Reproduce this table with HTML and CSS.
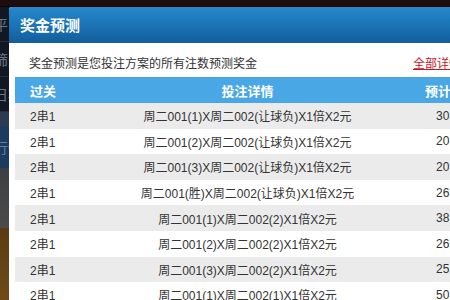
FILE: index.html
```html
<!DOCTYPE html>
<html lang="zh-CN">
<head>
<meta charset="utf-8">
<title>奖金预测</title>
<link rel="stylesheet" href="styles.css">
</head>
<body>
<div class="page">
  <div class="topbar"></div>
  <div class="side">
    <div class="side-item dark">平台</div>
    <div class="side-item dark">筛选</div>
    <div class="side-item dark">日期</div>
    <div class="side-item steel"></div>
    <div class="side-item blue">行情</div>
    <div class="side-item gray"></div>
    <div class="side-item brown"></div>
  </div>
</div>

<div class="modal">
  <div class="modal-title">奖金预测</div>
  <div class="modal-desc">
    <span>奖金预测是您投注方案的所有注数预测奖金</span>
    <a class="all-link" href="#">全部详情</a>
  </div>
  <table class="grid">
    <thead>
      <tr><th class="c1">过关</th><th class="c2">投注详情</th><th class="c3">预计奖金</th></tr>
    </thead>
    <tbody>
      <tr><td class="c1">2串1</td><td class="c2">周二001(1)X周二002(让球负)X1倍X2元</td><td class="c3">30.24</td></tr>
      <tr><td class="c1">2串1</td><td class="c2">周二001(2)X周二002(让球负)X1倍X2元</td><td class="c3">20.16</td></tr>
      <tr><td class="c1">2串1</td><td class="c2">周二001(3)X周二002(让球负)X1倍X2元</td><td class="c3">20.16</td></tr>
      <tr><td class="c1">2串1</td><td class="c2">周二001(胜)X周二002(让球负)X1倍X2元</td><td class="c3">26.88</td></tr>
      <tr><td class="c1">2串1</td><td class="c2">周二001(1)X周二002(2)X1倍X2元</td><td class="c3">38.40</td></tr>
      <tr><td class="c1">2串1</td><td class="c2">周二001(2)X周二002(2)X1倍X2元</td><td class="c3">26.40</td></tr>
      <tr><td class="c1">2串1</td><td class="c2">周二001(3)X周二002(2)X1倍X2元</td><td class="c3">25.60</td></tr>
      <tr><td class="c1">2串1</td><td class="c2">周二001(1)X周二002(1)X1倍X2元</td><td class="c3">50.40</td></tr>
    </tbody>
  </table>
</div>
</body>
</html>
```

FILE: styles.css
```css
html, body {
  margin: 0;
  padding: 0;
  width: 450px;
  height: 300px;
  overflow: hidden;
  background: #141720;
  font-family: "Liberation Sans", "Noto Sans CJK SC", sans-serif;
}

.page {
  display: flex;
  flex-direction: column;
  height: 300px;
}

.topbar {
  height: 6px;
  background: #1e0d0e;
  border-bottom: 1px solid #0a0506;
}

.side {
  display: flex;
  flex-direction: column;
  flex: 1;
  width: 60px;
}

.side-item {
  display: flex;
  align-items: center;
  font-size: 14px;
  color: #6f7582;
  overflow: hidden;
  white-space: nowrap;
}

.side-item.dark {
  height: 34px;
  background: #121823;
  border-bottom: 1px solid #262c38;
  text-indent: -6px;
}

.side-item.steel {
  height: 14px;
  background: #2b3b52;
}

.side-item.blue {
  height: 42px;
  background: #1d3b60;
  color: #5f7fa3;
  text-indent: -6px;
}

.side-item.gray {
  height: 60px;
  background: linear-gradient(#3d3f43, #4b4b4b);
}

.side-item.brown {
  flex: 1;
  background: linear-gradient(#5b3c12, #6e4a17);
}

.modal {
  position: absolute;
  left: 9px;
  top: 7px;
  width: 490px;
  height: 310px;
  background: #fff;
  border-radius: 3px 3px 0 0;
  overflow: hidden;
}

.modal-title {
  height: 36px;
  line-height: 37px;
  padding-left: 11px;
  background: linear-gradient(#2688cc, #1a72b4 55%, #135d9a);
  color: #fff;
  font-size: 15px;
  font-weight: bold;
}

.modal-desc {
  display: flex;
  justify-content: space-between;
  align-items: center;
  height: 34px;
  padding: 4px 0 0 20px;
  box-sizing: border-box;
  font-size: 12px;
  color: #333;
}

.all-link {
  color: #c8161d;
  text-decoration: underline;
  margin-right: -6px;
  width: 92px;
}

.grid {
  margin-left: 6px;
  border-collapse: collapse;
  table-layout: fixed;
  width: 476px;
  font-size: 12px;
  color: #333;
}

.grid th {
  height: 26px;
  padding: 0;
  background: #4aa7e6;
  color: #fff;
  font-size: 13px;
  font-weight: bold;
}

.grid td {
  height: 25.6px;
  padding: 0;
}

.grid tbody tr:nth-child(odd) td {
  background: #ebebeb;
}

.grid .c1 {
  width: 69px;
  text-align: left;
  padding-left: 15px;
  box-sizing: border-box;
}

.grid .c2 {
  width: 327px;
  text-align: center;
}

.grid .c3 {
  width: 80px;
  text-align: center;
}
```
